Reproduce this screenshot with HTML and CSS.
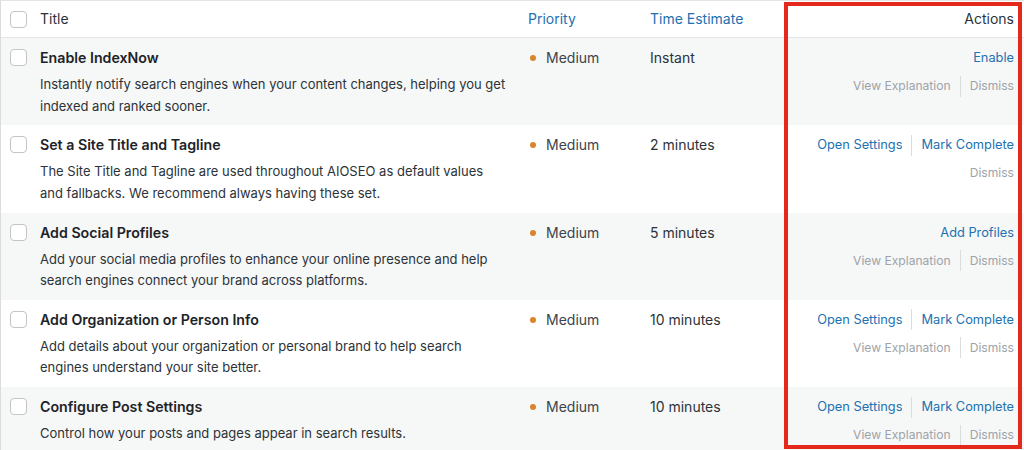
FILE: index.html
```html
<!DOCTYPE html>
<html lang="en">
<head>
<meta charset="utf-8">
<title>SEO Checklist</title>
<link rel="stylesheet" href="styles.css">
</head>
<body>
<div class="page">
  <div class="table">
    <div class="row head">
      <div class="cell cb"><span class="checkbox"></span></div>
      <div class="cell title-col">Title</div>
      <div class="cell sort">Priority</div>
      <div class="cell sort">Time Estimate</div>
      <div class="cell actions">Actions</div>
    </div>

    <div class="row alt">
      <div class="cell cb"><span class="checkbox"></span></div>
      <div class="cell title-col">
        <div class="task-title">Enable IndexNow</div>
        <div class="task-desc">Instantly notify search engines when your content changes, helping you get indexed and ranked sooner.</div>
      </div>
      <div class="cell priority"><span class="dot"></span>Medium</div>
      <div class="cell time">Instant</div>
      <div class="cell actions">
        <div class="action-line"><a class="link">Enable</a></div>
        <div class="action-line muted"><a class="link">View Explanation</a><span class="sep"></span><a class="link">Dismiss</a></div>
      </div>
    </div>

    <div class="row">
      <div class="cell cb"><span class="checkbox"></span></div>
      <div class="cell title-col">
        <div class="task-title">Set a Site Title and Tagline</div>
        <div class="task-desc">The Site Title and Tagline are used throughout AIOSEO as default values and fallbacks. We recommend always having these set.</div>
      </div>
      <div class="cell priority"><span class="dot"></span>Medium</div>
      <div class="cell time">2 minutes</div>
      <div class="cell actions">
        <div class="action-line"><a class="link">Open Settings</a><span class="sep"></span><a class="link">Mark Complete</a></div>
        <div class="action-line muted"><a class="link">Dismiss</a></div>
      </div>
    </div>

    <div class="row alt">
      <div class="cell cb"><span class="checkbox"></span></div>
      <div class="cell title-col">
        <div class="task-title">Add Social Profiles</div>
        <div class="task-desc">Add your social media profiles to enhance your online presence and help search engines connect your brand across platforms.</div>
      </div>
      <div class="cell priority"><span class="dot"></span>Medium</div>
      <div class="cell time">5 minutes</div>
      <div class="cell actions">
        <div class="action-line"><a class="link">Add Profiles</a></div>
        <div class="action-line muted"><a class="link">View Explanation</a><span class="sep"></span><a class="link">Dismiss</a></div>
      </div>
    </div>

    <div class="row">
      <div class="cell cb"><span class="checkbox"></span></div>
      <div class="cell title-col">
        <div class="task-title">Add Organization or Person Info</div>
        <div class="task-desc">Add details about your organization or personal brand to help search engines understand your site better.</div>
      </div>
      <div class="cell priority"><span class="dot"></span>Medium</div>
      <div class="cell time">10 minutes</div>
      <div class="cell actions">
        <div class="action-line"><a class="link">Open Settings</a><span class="sep"></span><a class="link">Mark Complete</a></div>
        <div class="action-line muted"><a class="link">View Explanation</a><span class="sep"></span><a class="link">Dismiss</a></div>
      </div>
    </div>

    <div class="row alt">
      <div class="cell cb"><span class="checkbox"></span></div>
      <div class="cell title-col">
        <div class="task-title">Configure Post Settings</div>
        <div class="task-desc">Control how your posts and pages appear in search results.</div>
      </div>
      <div class="cell priority"><span class="dot"></span>Medium</div>
      <div class="cell time">10 minutes</div>
      <div class="cell actions">
        <div class="action-line"><a class="link">Open Settings</a><span class="sep"></span><a class="link">Mark Complete</a></div>
        <div class="action-line muted"><a class="link">View Explanation</a><span class="sep"></span><a class="link">Dismiss</a></div>
      </div>
    </div>
  </div>
  <div class="highlight"></div>
</div>
</body>
</html>
```

FILE: styles.css
```css
* { box-sizing: border-box; }
html, body {
  margin: 0;
  padding: 0;
  background: #ffffff;
}
body {
  font-family: Inter, "Noto Sans", Roboto, sans-serif;
  font-size: 14px;
  color: #2c3338;
  overflow: hidden;
  height: 450px;
}
.page {
  position: relative;
  width: 1024px;
  height: 450px;
  overflow: hidden;
}
.table {
  border-top: 1px solid #e2e4e7;
  border-left: 1px solid #dcdcde;
}
.row {
  display: grid;
  grid-template-columns: 39px 488px 122px 135px 1fr;
  height: 87.3px;
  background: #ffffff;
}
.row.alt { background: #f6f7f7; }
.row.head {
  height: 37px;
  border-bottom: 1px solid #e2e4e7;
  align-items: center;
  background: #ffffff;
}
.cell {
  padding-top: 9px;
  line-height: 22px;
}
.head .cell { padding-top: 0; }
.cb { padding-left: 9px; }
.checkbox {
  display: block;
  width: 17px;
  height: 17px;
  border: 1px solid #c3c4c7;
  border-radius: 4px;
  background: #ffffff;
  margin-top: 2px;
}
.head .checkbox { margin-top: 0; }
.title-col { color: #2c3338; }
.task-title {
  font-weight: 600;
  font-size: 14.2px;
  color: #1d2327;
  margin-bottom: 5px;
}
.task-desc {
  font-size: 13px;
  line-height: 21.5px;
  color: #2c3338;
  padding-right: 21px;
}
.sort { color: #2271b1; }
.priority {
  display: flex;
  align-items: flex-start;
  color: #3c434a;
}
.dot {
  width: 6px;
  height: 6px;
  border-radius: 50%;
  background: #d9852b;
  margin: 8px 10px 0 2px;
  flex: none;
}
.time { color: #2c3338; }
.actions {
  text-align: right;
  padding-right: 10px;
}
.action-line {
  display: flex;
  justify-content: flex-end;
  align-items: center;
  height: 22px;
  margin-bottom: 6px;
}
.link {
  color: #2271b1;
  font-size: 12.8px;
}
.muted .link {
  color: #9ea3a8;
  font-size: 12.1px;
}
.sep {
  width: 1px;
  height: 21px;
  background: #dcdcde;
  margin: 0 9px;
}
.highlight {
  position: absolute;
  left: 784px;
  top: 2px;
  width: 238px;
  height: 447px;
  border: 4px solid #e4281c;
  pointer-events: none;
}
```
